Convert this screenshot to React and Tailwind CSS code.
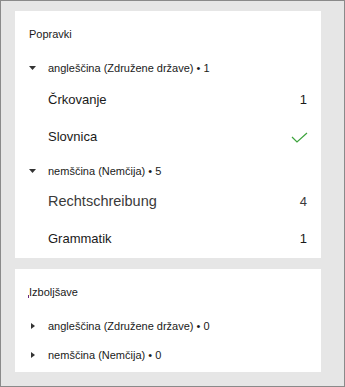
import React from 'react';

const DownTri = () => (
    <svg width="7" height="4" viewBox="0 0 7 4" className="shrink-0">
        <path d="M0 0 H7 L3.5 4 Z" fill="#333" />
    </svg>
);

const RightTri = () => (
    <svg width="4" height="6" viewBox="0 0 4 6" className="shrink-0">
        <path d="M0 0 L4 3 L0 6 Z" fill="#333" />
    </svg>
);

const Check = () => (
    <svg width="17" height="11" viewBox="0 0 17 11" className="shrink-0">
        <path d="M1 5 L6 10 L16 1" fill="none" stroke="#3ca33c" strokeWidth="1.2" />
    </svg>
);

const LangRow = ({ label, open, h, textClass = 'text-[11px]' }) => (
    <div className={`flex items-center ${h}`}>
        <div className="w-[19px] flex items-center">
            {open ? <DownTri /> : <span className="pl-[2px] flex"><RightTri /></span>}
        </div>
        <span className={`${textClass} text-[#1a1a1a]`}>{label}</span>
    </div>
);

const ItemRow = ({ label, h, size, color = 'text-[#1a1a1a]', right }) => (
    <div className={`flex items-center justify-between pl-[19px] ${h}`}>
        <span className={`${size} ${color}`}>{label}</span>
        {right}
    </div>
);

const App = () => {
    return (
        <div
            className="w-[345px] h-[387px] border border-[#8a8a8a] bg-[#e6e6e6] pl-[14px] pt-[10px] flex flex-col gap-[11px]"
            style={{ fontFamily: '"Liberation Sans", Arial, sans-serif' }}
        >
            <div className="w-[306px] h-[247px] bg-white pt-[8px] pl-[14px] pr-[14px]">
                <div className="h-[30px] flex items-center text-[11px] text-[#1a1a1a]">Popravki</div>
                <LangRow label="angleščina (Združene države) • 1" open h="h-[38px]" />
                <ItemRow label="Črkovanje" h="h-[26px]" size="text-[13px]" right={<span className="text-[13px] text-[#1a1a1a]">1</span>} />
                <ItemRow label="Slovnica" h="h-[48px]" size="text-[13px]" right={<span className="-mr-[1px] flex"><Check /></span>} />
                <LangRow label="nemščina (Nemčija) • 5" open h="h-[20px]" />
                <ItemRow
                    label="Rechtschreibung"
                    h="h-[42px]"
                    size="text-[14.5px]"
                    color="text-[#3a3a3a]"
                    right={<span className="text-[13px] text-[#3a3a3a]">4</span>}
                />
                <ItemRow label="Grammatik" h="h-[32px]" size="text-[13px]" right={<span className="text-[13px] text-[#1a1a1a]">1</span>} />
            </div>

            <div className="w-[306px] h-[103px] bg-white pt-[8px] pl-[14px] pr-[14px]">
                <div className="h-[30px] flex items-center text-[11px] text-[#1a1a1a]">
                    <span className="relative">
                        <span className="absolute -left-[1px] bottom-[2px] w-[1px] h-[3px] bg-[#6b2a7a]" />
                        Izboljšave
                    </span>
                </div>
                <LangRow label="angleščina (Združene države) • 0" h="h-[38px]" />
                <LangRow label="nemščina (Nemčija) • 0" h="h-[20px]" />
            </div>
        </div>
    );
};

export default App;
